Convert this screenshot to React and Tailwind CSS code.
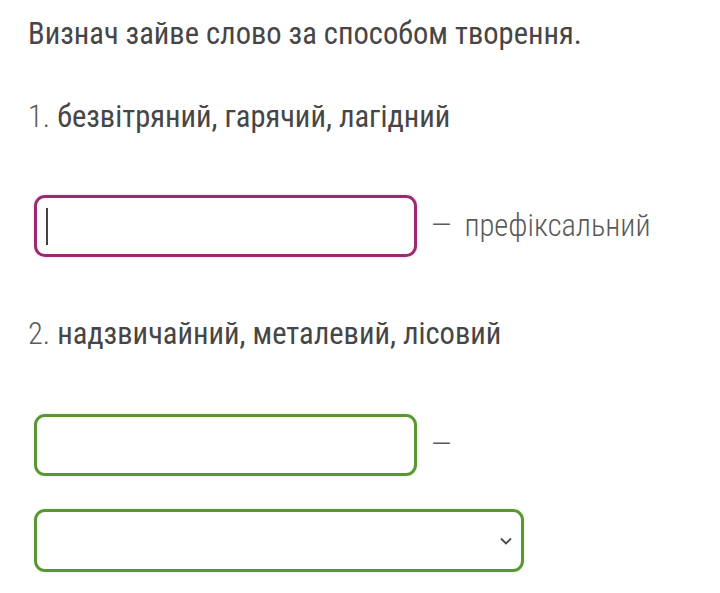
export default function App() {
  return (
    <div className="min-h-[593px] w-[720px] bg-white text-[#474747] font-['Roboto',sans-serif] [font-stretch:75%] pl-[28px] pt-[14px]">
      <p className="text-[30.5px] leading-[40px] text-[#464646]">Визнач зайве слово за способом творення.</p>
      <p className="mt-[43px] text-[30.5px] leading-[40px] text-[#464646]">
        <span className="font-light text-[#5a5a5a]">1.</span> безвітряний, гарячий, лагідний
      </p>
      <div className="mt-[58px] ml-[6px] flex items-center">
        <div className="relative h-[62px] w-[383px] rounded-[11px] border-[3px] border-[#9b2a70] shadow-[0_0_3px_#f3c6e4]">
          <div className="absolute left-[9px] top-[10px] h-[37px] w-[2px] bg-[#444]"></div>
        </div>
        <span className="ml-[14px] text-[30.5px] font-light text-[#5a5a5a]">—</span>
        <span className="ml-[13px] text-[30.5px] font-light text-[#5a5a5a]">префіксальний</span>
      </div>
      <p className="mt-[57px] text-[30.5px] leading-[40px] text-[#464646]">
        <span className="font-light text-[#5a5a5a]">2.</span> надзвичайний, металевий, лісовий
      </p>
      <div className="mt-[60px] ml-[6px] flex items-center">
        <div className="h-[62px] w-[383px] rounded-[11px] border-[3px] border-[#5b9636] shadow-[0_0_3px_#d9f2c4]"></div>
        <span className="ml-[14px] text-[30.5px] font-light text-[#5a5a5a]">—</span>
      </div>
      <div className="mt-[33px] ml-[6px] flex h-[63px] w-[490px] items-center justify-end rounded-[11px] border-[3px] border-[#5b9636] pr-[8px] shadow-[0_0_3px_#d9f2c4]">
        <svg width="14" height="10" viewBox="0 0 14 10" fill="none" stroke="#4a4a4a" strokeWidth="1.8">
          <path d="M2 2.5 L7 7.5 L12 2.5" />
        </svg>
      </div>
    </div>
  );
}
